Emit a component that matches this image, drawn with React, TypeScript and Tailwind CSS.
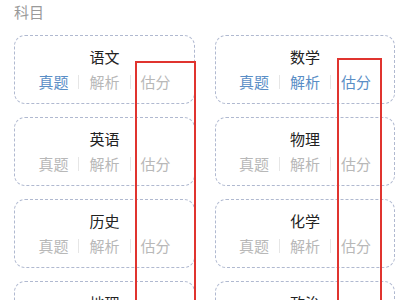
import React from "react";

type Subject = { name: string; active: boolean[] };

const subjects: Subject[] = [
  { name: "语文", active: [true, false, false] },
  { name: "数学", active: [true, true, true] },
  { name: "英语", active: [false, false, false] },
  { name: "物理", active: [false, false, false] },
  { name: "历史", active: [false, false, false] },
  { name: "化学", active: [false, false, false] },
  { name: "地理", active: [false, false, false] },
  { name: "政治", active: [false, false, false] },
];

const labels = ["真题", "解析", "估分"];

function Card({ s }: { s: Subject }) {
  return (
    <div className="h-[69px] rounded-[11px] border border-dashed border-[#b0b9d0] flex flex-col items-center pt-[9px]">
      <div className="text-[15px] leading-[24px] text-[#222]">{s.name}</div>
      <div className="flex items-center mt-[1px]">
        {labels.map((l, i) => (
          <React.Fragment key={l}>
            {i > 0 && <div className="w-px h-[14px] bg-[#e6e6e6]" />}
            <div
              className={
                "px-[10px] text-[15px] leading-[24px] " +
                (s.active[i] ? "text-[#5a8ec6]" : "text-[#b8b8b8]")
              }
            >
              {l}
            </div>
          </React.Fragment>
        ))}
      </div>
    </div>
  );
}

export default function App() {
  return (
    <div
      className="relative w-[400px] h-[300px] overflow-hidden bg-white"
      style={{ fontFamily: '"Noto Sans CJK SC", "Noto Sans", sans-serif' }}
    >
      <div className="pl-[14px] pt-[1px]">
        <div className="text-[15px] leading-[22px] text-[#9a9a9a]">科目</div>
        <div className="grid grid-cols-[181px_180px] gap-x-[20px] gap-y-[13px] mt-[12px]">
          {subjects.map((s) => (
            <Card key={s.name} s={s} />
          ))}
        </div>
      </div>
      <div className="absolute left-[135px] top-[61px] w-[61px] h-[260px] border-2 border-[#e0342f]" />
      <div className="absolute left-[337px] top-[58px] w-[45px] h-[260px] border-2 border-[#e0342f]" />
    </div>
  );
}
